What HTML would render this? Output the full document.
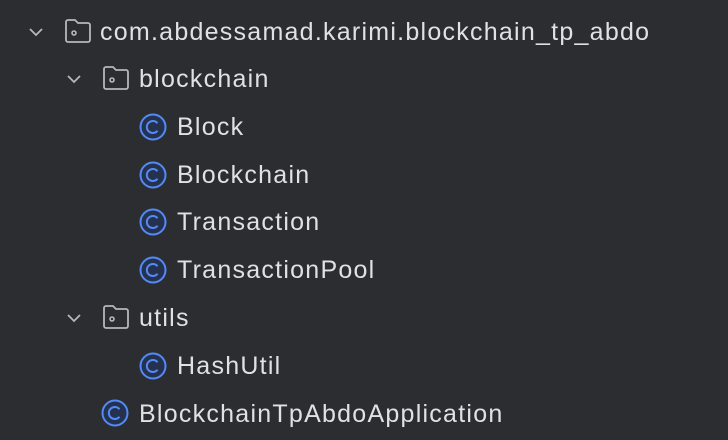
<!DOCTYPE html>
<html><head><meta charset="utf-8"><style>
html,body{margin:0;padding:0;background:#2b2d30;width:728px;height:440px;overflow:hidden}
.r{position:absolute;left:0;height:48px;font-family:"Liberation Sans",sans-serif;font-size:25px;letter-spacing:1.25px;color:#dfe1e5;white-space:nowrap}
.r svg{position:absolute}
.t{position:absolute;top:9px;line-height:30px}
</style></head><body>
<div class="r" style="top:8px;width:728px">
<svg style="left:28px;top:17px" width="16" height="14" viewBox="0 0 16 14"><path d="M2 4l6 6 6-6" fill="none" stroke="#b4b8bf" stroke-width="1.8"/></svg>
<svg style="left:64px;top:10px" width="28" height="26" viewBox="0 0 28 26"><path d="M2 4a2 2 0 0 1 2-2h7l3 3h10a2 2 0 0 1 2 2v15a2 2 0 0 1-2 2H4a2 2 0 0 1-2-2z" fill="none" stroke="#b4b8bf" stroke-width="1.8"/><circle cx="10" cy="15" r="2" fill="none" stroke="#b4b8bf" stroke-width="1.6"/></svg>
<span class="t" style="left:100px">com.abdessamad.karimi.blockchain_tp_abdo</span></div>
<div class="r" style="top:55px;width:728px">
<svg style="left:66px;top:17px" width="16" height="14" viewBox="0 0 16 14"><path d="M2 4l6 6 6-6" fill="none" stroke="#b4b8bf" stroke-width="1.8"/></svg>
<svg style="left:102px;top:10px" width="28" height="26" viewBox="0 0 28 26"><path d="M2 4a2 2 0 0 1 2-2h7l3 3h10a2 2 0 0 1 2 2v15a2 2 0 0 1-2 2H4a2 2 0 0 1-2-2z" fill="none" stroke="#b4b8bf" stroke-width="1.8"/><circle cx="10" cy="15" r="2" fill="none" stroke="#b4b8bf" stroke-width="1.6"/></svg>
<span class="t" style="left:139px">blockchain</span></div>
<div class="r" style="top:103px;width:728px"><svg style="left:139px;top:10px" width="28" height="28" viewBox="0 0 28 28"><circle cx="14" cy="14" r="12.5" fill="#25324d" stroke="#548af7" stroke-width="2"/><path d="M18.5 10.2a6 6 0 1 0 0 7.6" fill="none" stroke="#548af7" stroke-width="2"/></svg><span class="t" style="left:177px">Block</span></div>
<div class="r" style="top:151px;width:728px"><svg style="left:139px;top:10px" width="28" height="28" viewBox="0 0 28 28"><circle cx="14" cy="14" r="12.5" fill="#25324d" stroke="#548af7" stroke-width="2"/><path d="M18.5 10.2a6 6 0 1 0 0 7.6" fill="none" stroke="#548af7" stroke-width="2"/></svg><span class="t" style="left:177px">Blockchain</span></div>
<div class="r" style="top:198px;width:728px"><svg style="left:139px;top:10px" width="28" height="28" viewBox="0 0 28 28"><circle cx="14" cy="14" r="12.5" fill="#25324d" stroke="#548af7" stroke-width="2"/><path d="M18.5 10.2a6 6 0 1 0 0 7.6" fill="none" stroke="#548af7" stroke-width="2"/></svg><span class="t" style="left:177px">Transaction</span></div>
<div class="r" style="top:246px;width:728px"><svg style="left:139px;top:10px" width="28" height="28" viewBox="0 0 28 28"><circle cx="14" cy="14" r="12.5" fill="#25324d" stroke="#548af7" stroke-width="2"/><path d="M18.5 10.2a6 6 0 1 0 0 7.6" fill="none" stroke="#548af7" stroke-width="2"/></svg><span class="t" style="left:177px">TransactionPool</span></div>
<div class="r" style="top:294px;width:728px">
<svg style="left:66px;top:17px" width="16" height="14" viewBox="0 0 16 14"><path d="M2 4l6 6 6-6" fill="none" stroke="#b4b8bf" stroke-width="1.8"/></svg>
<svg style="left:102px;top:10px" width="28" height="26" viewBox="0 0 28 26"><path d="M2 4a2 2 0 0 1 2-2h7l3 3h10a2 2 0 0 1 2 2v15a2 2 0 0 1-2 2H4a2 2 0 0 1-2-2z" fill="none" stroke="#b4b8bf" stroke-width="1.8"/><circle cx="10" cy="15" r="2" fill="none" stroke="#b4b8bf" stroke-width="1.6"/></svg>
<span class="t" style="left:139px">utils</span></div>
<div class="r" style="top:342px;width:728px"><svg style="left:139px;top:10px" width="28" height="28" viewBox="0 0 28 28"><circle cx="14" cy="14" r="12.5" fill="#25324d" stroke="#548af7" stroke-width="2"/><path d="M18.5 10.2a6 6 0 1 0 0 7.6" fill="none" stroke="#548af7" stroke-width="2"/></svg><span class="t" style="left:177px">HashUtil</span></div>
<div class="r" style="top:390px;width:728px"><svg style="left:101px;top:9px" width="28" height="28" viewBox="0 0 28 28"><circle cx="14" cy="14" r="12.5" fill="#25324d" stroke="#548af7" stroke-width="2"/><path d="M18.5 10.2a6 6 0 1 0 0 7.6" fill="none" stroke="#548af7" stroke-width="2"/></svg><span class="t" style="left:139px">BlockchainTpAbdoApplication</span></div>
</body></html>
